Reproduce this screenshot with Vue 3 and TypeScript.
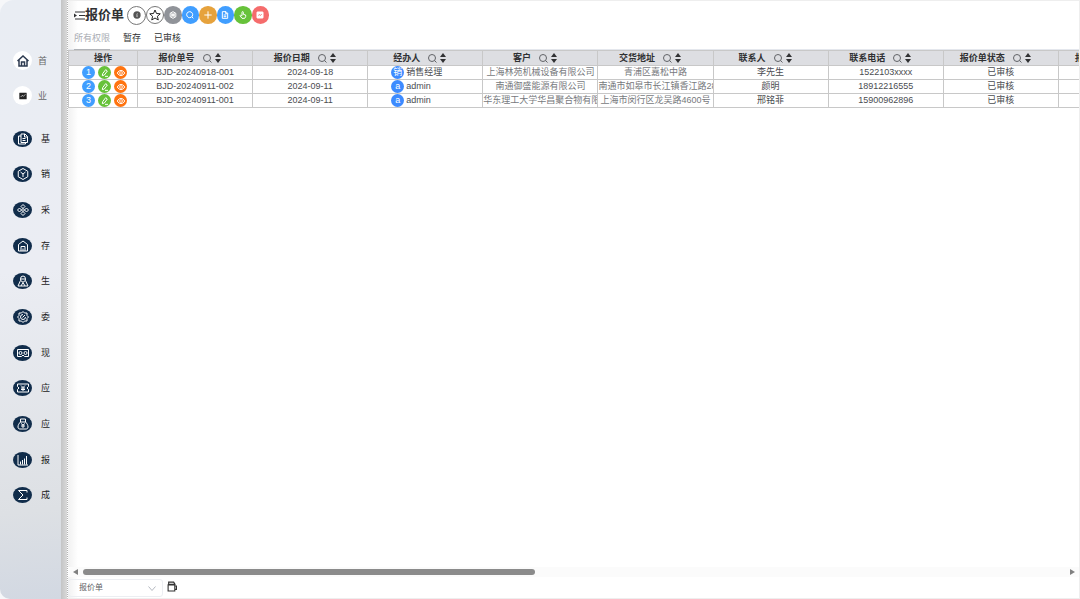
<script setup lang="ts">
import { ref } from 'vue'

interface Row {
  no: string
  date: string
  handler: string
  customer: string
  address: string
  contact: string
  phone: string
  status: string
}

const columns: string[] = ['报价单号', '报价日期', '经办人', '客户', '交货地址', '联系人', '联系电话', '报价单状态', '报价单类型']

const rows: Row[] = [
  { no: 'BJD-20240918-001', date: '2024-09-18', handler: '销售经理', customer: '上海林苑机械设备有限公司', address: '青浦区嘉松中路', contact: '李先生', phone: '1522103xxxx', status: '已审核' },
  { no: 'BJD-20240911-002', date: '2024-09-11', handler: 'admin', customer: '南通御盛能源有限公司', address: '南通市如皋市长江镇香江路28号', contact: '颜明', phone: '18912216555', status: '已审核' },
  { no: 'BJD-20240911-001', date: '2024-09-11', handler: 'admin', customer: '华东理工大学华昌聚合物有限公司', address: '上海市闵行区龙吴路4600号', contact: '邢铭菲', phone: '15900962896', status: '已审核' },
]

const tabs: string[] = ['所有权限', '暂存', '已审核']
const activeTab = ref('所有权限')
const sheet = ref('报价单')

// Icon outlines on a 24 x 24 grid
const modules: { label: string; path: string }[] = [
  { label: '基', path: 'M8 2h8l5 5v12H8zM15 2v6h6M11 11h6M11 15h6M8 6H3v16h14v-3' },
  { label: '销', path: 'M12 1l9.500 5.500v11L12 23l-9.500-5.500v-11zM7 8l5 4 5-4M12 12v6' },
  { label: '采', path: 'M12 1l4 4-4 4-4-4zM12 15l4 4-4 4-4-4zM5 8l4 4-4 4-4-4zM19 8l4 4-4 4-4-4zM12 9l3 3-3 3-3-3z' },
  { label: '存', path: 'M3 22V9l9-7 9 7v13zM8 22v-9h8v9M12 17v5' },
  { label: '生', path: 'M7 8a5 6 0 0 1 10 0c0 3-2 6-5 6s-5-3-5-6M7 11L2 22h20l-5-11M8 22l4-7 4 7M8 8h8' },
  { label: '委', path: 'M12 1l3 3h5v5l3 3-3 3v5h-5l-3 3-3-3H4v-5l-3-3 3-3V4h5zM12 7a5 5 0 1 0 5 5M11 13l5-5' },
  { label: '现', path: 'M1 5h22v14h-8l-3-3-3 3H1zM4 12a3 3 0 1 0 6 0 3 3 0 1 0-6 0M14 12a3 3 0 1 0 6 0 3 3 0 1 0-6 0' },
  { label: '应', path: 'M1 4h22v5l-3 3 3 3v5H1v-5l3-3-3-3zM8 7l4 4 4-4M12 11v7M8 12h8M8 15h8' },
  { label: '应', path: 'M7 2h10v6H7zM7 8c-3 3-5 6-5 10 0 3 2 4 4 4h12c2 0 4-1 4-4 0-4-2-7-5-10M8 11l4 3 4-3M12 14v6M8 16h8' },
  { label: '报', path: 'M2 2v20h20M7 21v-6M11 21v-9M15 21V9M19 21V4' },
  { label: '成', path: 'M20 7V3H3l9 9-9 9h17v-4' },
]

const tools: { name: string; tone: string; path: string }[] = [
  { name: '设置', tone: 'gray', path: 'M12 2l8.500 5v10L12 22l-8.500-5V7zM12 8a4 4 0 1 0 .1 0M5 7l14 10M19 7L5 17' },
  { name: '查询', tone: 'blue', path: 'M11 2a9 9 0 1 0 .1 0M17 17l5 5' },
  { name: '新增', tone: 'amber', path: 'M12 1v22M1 12h22' },
  { name: '单据', tone: 'blue', path: 'M4 2h11l5 5v15H4zM14 2v6h6M8 12h8M8 17h8' },
  { name: '提交', tone: 'green', path: 'M9 14V4c0-3 4-3 4 0v6l7 2v5l-3 5H9l-6-8c1-2 3-2 6 1' },
]
</script>

<template>
  <div class="app">
    <aside class="side">
      <nav class="top-nav">
        <a href="#" class="entry">
          <span class="disc">
            <svg viewBox="0 0 24 24" class="house"><path d="M1 12L12 2l11 10M4 10v12h16V10M9 22v-8h6v8" /></svg>
          </span>
          <span>首</span>
        </a>
        <a href="#" class="entry">
          <span class="disc">
            <svg viewBox="0 0 24 24" class="board"><rect x="1" y="2" width="22" height="20" rx="1" /><path d="M5 15l5-5 3 3 6-6" /></svg>
          </span>
          <span>业</span>
        </a>
      </nav>
      <nav class="modules">
        <a v-for="m in modules" :key="m.path" href="#" class="module">
          <span class="oval"><svg viewBox="0 0 24 24"><path :d="m.path" /></svg></span>
          <span>{{ m.label }}</span>
        </a>
      </nav>
    </aside>
    <div class="divider"></div>

    <main class="main">
      <header class="head">
        <svg class="menu" viewBox="0 0 11 9"><path d="M1 1h10M5 4.500h6M1 8h10" /><path class="tip" d="M0 2.500v4l3-2z" /></svg>
        <h1>报价单</h1>
        <button type="button" class="round info" aria-label="说明">
          <svg viewBox="0 0 24 24"><circle cx="12" cy="12" r="11" /><path d="M13 6v2M10.500 11h2l-1 6h2" /></svg>
        </button>
        <button type="button" class="round star" aria-label="收藏">
          <svg viewBox="0 0 24 24"><path d="M12 2l3 7 7.500.6-5.700 5L18.500 22 12 18l-6.500 4 1.700-7.400-5.700-5L9 9z" /></svg>
        </button>
        <div class="tools">
          <button v-for="t in tools" :key="t.name" type="button" :class="t.tone" :aria-label="t.name">
            <svg viewBox="0 0 24 24"><path :d="t.path" /></svg>
          </button>
          <button type="button" class="red" aria-label="审批">
            <svg viewBox="0 0 24 24"><rect x="3" y="3" width="18" height="18" rx="1" fill="#fff" /><path d="M7 13l4-2 2 2 4-3" class="mark" /></svg>
          </button>
        </div>
      </header>

      <div class="tabs">
        <button v-for="t in tabs" :key="t" type="button" :class="{ active: t === activeTab }" @click="activeTab = t">{{ t }}</button>
      </div>

      <div class="sheet">
        <table>
          <thead>
            <tr>
              <th class="ops">操作</th>
              <th v-for="c in columns" :key="c">
                <span class="th">
                  <span>{{ c }}</span>
                  <svg class="find" viewBox="0 0 9 9"><circle cx="4" cy="4" r="3.500" /><path d="M6.500 6.500l2 2" /></svg>
                  <svg class="sort" viewBox="0 0 6 10"><path d="M3 0l3 4H0zM0 6h6l-3 4z" /></svg>
                </span>
              </th>
            </tr>
          </thead>
          <tbody>
            <tr v-for="(r, i) in rows" :key="r.no">
              <td>
                <span class="acts">
                  <span class="dot num">{{ i + 1 }}</span>
                  <button type="button" class="dot edit" aria-label="编辑">
                    <svg viewBox="0 0 24 24"><path d="M5 14L14 2l5 4-9 12-6 2zM12 22h9" /></svg>
                  </button>
                  <button type="button" class="dot view" aria-label="查看">
                    <svg viewBox="0 0 24 24"><path d="M1 12c5-10 17-10 22 0-5 10-17 10-22 0zM12 8a4 4 0 1 0 .1 0" /></svg>
                  </button>
                </span>
              </td>
              <td>{{ r.no }}</td>
              <td>{{ r.date }}</td>
              <td>
                <span class="person"><span class="dot avatar">{{ r.handler[0] }}</span>{{ r.handler }}</span>
              </td>
              <td class="soft">{{ r.customer }}</td>
              <td class="soft">{{ r.address }}</td>
              <td>{{ r.contact }}</td>
              <td>{{ r.phone }}</td>
              <td>{{ r.status }}</td>
              <td></td>
            </tr>
          </tbody>
        </table>
      </div>

      <div class="scroll">
        <svg viewBox="0 0 5 6"><path d="M5 0v6L0 3z" /></svg>
        <div class="track"><div class="thumb"></div></div>
        <svg viewBox="0 0 5 6"><path d="M0 0v6l5-3z" /></svg>
      </div>

      <footer class="foot">
        <label class="picker">
          <select v-model="sheet" aria-label="单据类型"><option>报价单</option></select>
          <svg viewBox="0 0 8 5"><path d="M.5.5L4 4.500 7.500.5" /></svg>
        </label>
        <button type="button" class="print" aria-label="打印">
          <svg viewBox="0 0 9 10"><path d="M1 3.500h6v5.500H1zM1.500 3V1h4.500l1.500 2.500M7 4.500h1.500v3H7M2 3h5" /></svg>
        </button>
      </footer>
    </main>
  </div>
</template>

<style>
body {
  margin: 0;
  background: #f6f7f9;
}
</style>

<style scoped>
.app {
  display: flex;
  height: 100vh;
  overflow: hidden;
  font-family: "Liberation Sans", "Noto Sans CJK SC", sans-serif;
  font-size: 9px;
  line-height: 12px;
  color: #4a4c50;
}
* {
  box-sizing: border-box;
}
button {
  padding: 0;
  border: 0;
  background: none;
  font: inherit;
  color: inherit;
  cursor: pointer;
}
a {
  color: inherit;
  text-decoration: none;
}
svg {
  display: block;
  flex: none;
  fill: none;
  stroke: currentColor;
}

.side {
  flex: none;
  width: 61px;
  border-radius: 14px 0 0 10px;
  background: linear-gradient(175deg, #e9edf3 0%, #ebedf3 45%, #dde0e4 85%, #d2d8e2 100%);
}
.divider {
  flex: none;
  width: 6px;
  background: linear-gradient(90deg, #c3c4c5, #d9d9d9);
}
.top-nav {
  display: flex;
  flex-direction: column;
  gap: 16px;
  padding: 51px 0 0 13px;
}
.entry {
  display: flex;
  align-items: center;
  gap: 6px;
  height: 19px;
  color: #666;
}
.disc {
  display: grid;
  place-items: center;
  width: 19px;
  height: 19px;
  border-radius: 50%;
  background: #fff;
}
.house {
  width: 12px;
  color: #2c3a50;
  stroke-width: 3;
}
.board {
  width: 8px;
  stroke: #fff;
  stroke-width: 2;
}
.board rect {
  fill: #222;
  stroke: none;
}
.modules {
  display: flex;
  flex-direction: column;
  height: 392px;
  padding-left: 13px;
  margin-top: 16px;
  color: #222;
}
.module {
  display: flex;
  flex: 1;
  align-items: center;
  gap: 9px;
}
.oval {
  display: grid;
  place-items: center;
  width: 19px;
  height: 16px;
  border-radius: 50%;
  background: #112d4b;
  color: #fff;
}
.oval svg {
  width: 12px;
  stroke-width: 2;
}

.main {
  display: flex;
  flex: 1;
  flex-direction: column;
  min-width: 0;
  border: 1px solid #eee;
  border-left: 1px dotted #b4b4b4;
  background: linear-gradient(90deg, #f1f1f1, #fff 10px);
}
.head {
  display: flex;
  align-items: center;
  height: 28px;
  padding-left: 6px;
}
.menu {
  width: 11px;
  height: 9px;
  color: #303133;
}
.tip {
  fill: #303133;
  stroke: none;
}
h1 {
  margin: 0 3px 0 0;
  font-size: 13px;
  line-height: 20px;
  color: #303133;
}
.round {
  display: grid;
  place-items: center;
  border: 1px solid #777;
  border-radius: 50%;
  background: #fff;
}
.info {
  width: 19px;
  height: 19px;
}
.info svg {
  width: 8px;
  stroke: #fff;
  stroke-width: 2;
}
.info circle {
  fill: #555;
  stroke: none;
}
.star {
  width: 18px;
  height: 18px;
}
.star svg {
  width: 12px;
  color: #222;
  stroke-width: 2;
}
.tools {
  display: flex;
  width: 105px;
}
.tools button {
  display: grid;
  flex: 1;
  place-items: center;
  aspect-ratio: 1;
  border-radius: 50%;
  color: #fff;
}
.tools svg {
  width: 8px;
  stroke-width: 3;
}
.tools .gray { background: #909399; }
.tools .blue { background: #409eff; }
.tools .amber { background: #e6a23c; }
.tools .green { background: #67c23a; }
.tools .red { background: #f56c6c; }
.mark {
  stroke: #f56c6c;
}

.tabs {
  display: flex;
  gap: 13px;
  height: 21px;
  padding-left: 6px;
  border-bottom: 1px solid #e4e7ed;
}
.tabs button {
  height: 21px;
  padding-bottom: 3px;
  border-bottom: 1px solid transparent;
  color: #303133;
}
.tabs .active {
  border-bottom-color: #b0b3b8;
  color: #a8abb2;
}

.sheet {
  flex: 1;
  min-height: 0;
  overflow: hidden;
}
table {
  width: 1106px;
  table-layout: fixed;
  border-collapse: collapse;
}
th,
td {
  height: 14px;
  padding: 0;
  overflow: hidden;
  border: 1px solid #c8c8c8;
  background: #fff;
  line-height: 13px;
  text-align: center;
  white-space: nowrap;
}
th {
  height: 15px;
  background: #dddee2;
  color: #303133;
}
.ops {
  width: 69px;
}
.th {
  display: flex;
  align-items: center;
  justify-content: center;
  padding-right: 11px;
}
.find {
  width: 9px;
  margin: 0 3px 0 8px;
  color: #606266;
}
.sort {
  width: 6px;
  height: 10px;
  fill: #303133;
  stroke: none;
}
.soft {
  color: #77797d;
}
.acts,
.person {
  display: flex;
  align-items: center;
  height: 13px;
}
.acts {
  gap: 3px;
  padding-left: 13px;
}
.person {
  gap: 2px;
  padding-left: 23px;
}
.dot {
  display: grid;
  flex: none;
  place-items: center;
  width: 13px;
  height: 13px;
  border-radius: 50%;
  color: #fff;
}
.dot svg {
  width: 8px;
  stroke-width: 3;
}
.num { background: #409eff; }
.edit { background: #67c23a; }
.view { background: #ff7410; }
.avatar { background: #3d8bff; }

.scroll {
  display: flex;
  align-items: center;
  gap: 5px;
  height: 10px;
  padding: 0 4px 0 5px;
  margin-bottom: 1px;
  background: #fbfbfb;
}
.scroll svg {
  width: 5px;
  height: 6px;
  fill: #808080;
  stroke: none;
}
.track {
  flex: 1;
}
.thumb {
  width: 46%;
  height: 6px;
  border-radius: 3px;
  background: #8b8b8b;
}
.foot {
  display: flex;
  align-items: center;
  gap: 4px;
  height: 20px;
}
.picker {
  display: flex;
  align-items: center;
  width: 95px;
  height: 18px;
  padding: 0 6px 0 10px;
  border: 1px solid #eceef2;
  border-radius: 3px;
}
.picker select {
  flex: 1;
  padding: 0;
  border: 0;
  background: none;
  appearance: none;
  font: inherit;
  font-size: 8px;
  color: #606266;
}
.picker svg {
  width: 8px;
  color: #b4b8c0;
}
.print {
  align-self: flex-start;
  margin-top: 3px;
  color: #333;
}
.print svg {
  width: 10px;
}
</style>
